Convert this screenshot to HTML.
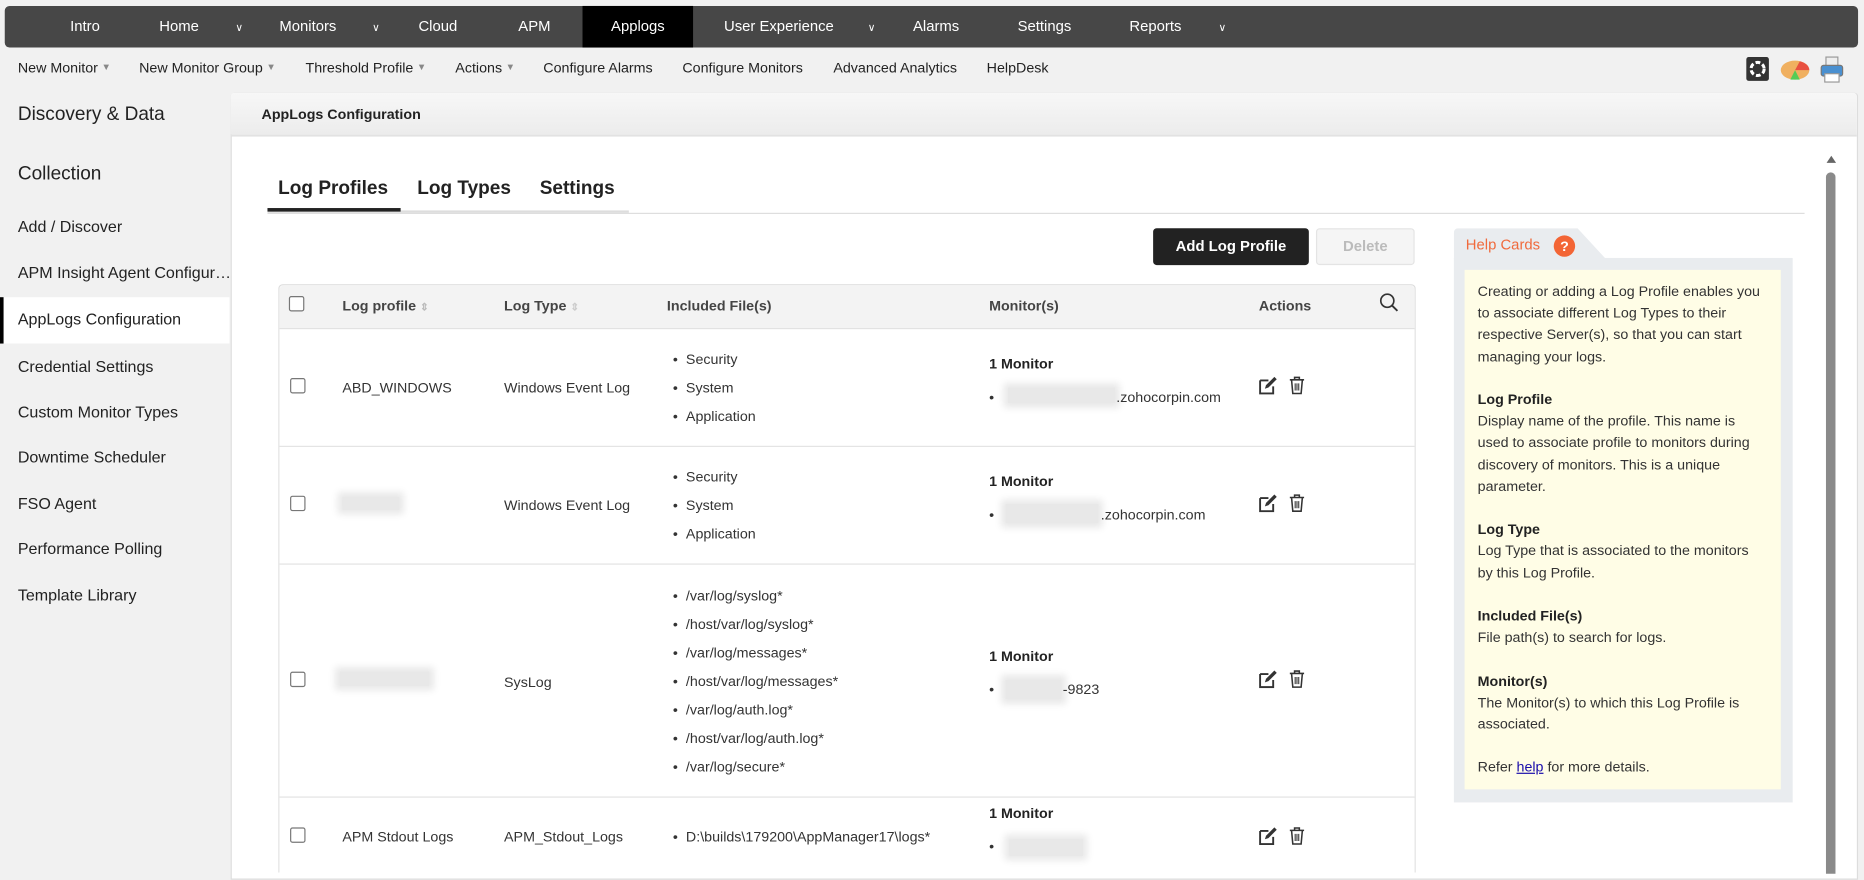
<!DOCTYPE html>
<html><head><meta charset="utf-8">
<style>
html,body{margin:0;padding:0;width:1864px;height:871px;overflow:hidden;background:#f1f1f1;}
#w{position:absolute;left:0;top:0;width:1568px;height:733px;transform:scale(1.18878);transform-origin:0 0;font-family:"Liberation Sans",sans-serif;color:#222;}
.a{position:absolute;white-space:nowrap;}
.nav{left:4px;top:5px;width:1559px;height:35px;background:#474747;border-radius:4px;}
.nav .a{color:#fff;font-size:12.5px;top:10px;}
.car{font-size:9px!important;top:13px!important;}
.sub{font-size:12px;top:50px;color:#222;}
.sub i{font-style:normal;color:#888;font-size:8px;vertical-align:2px;margin-left:3px;}
.side{font-size:13.5px;color:#222;}
.main{left:194px;top:78px;width:1367px;height:660px;background:#fff;border:1px solid #ddd;border-radius:3px 3px 0 0;}
.hdr{left:194px;top:78px;width:1368px;height:35px;background:linear-gradient(#f7f7f7,#ececec);border-bottom:2px solid #e2e2e2;border-radius:3px 3px 0 0;}
.td{font-size:12px;color:#333;}
.th{font-size:12px;font-weight:bold;color:#444;top:250px;}
.cb{width:11px;height:11px;border:1px solid #777;border-radius:2px;background:#fff;}
.bl{background:#e8e8e8;box-shadow:0 0 6px 4px #e8e8e8;}
.li{font-size:12px;color:#333;}
.li:before{content:"•";position:absolute;left:-11px;}
.help{font-size:12px;line-height:18.2px;color:#333;left:1243px;top:236px;white-space:normal;width:238px;}
.help b{color:#222;}
</style></head><body><div id="w">

<div class="a nav">
<span class="a" style="left:55px">Intro</span>
<span class="a" style="left:130px">Home</span><span class="a car" style="left:194px">&#8744;</span>
<span class="a" style="left:231px">Monitors</span><span class="a car" style="left:309px">&#8744;</span>
<span class="a" style="left:348px">Cloud</span>
<span class="a" style="left:432px">APM</span>
<div class="a" style="left:486px;top:0;width:93px;height:35px;background:#000"></div>
<span class="a" style="left:510px">Applogs</span>
<span class="a" style="left:605px">User Experience</span><span class="a car" style="left:726px">&#8744;</span>
<span class="a" style="left:764px">Alarms</span>
<span class="a" style="left:852px">Settings</span>
<span class="a" style="left:946px">Reports</span><span class="a car" style="left:1021px">&#8744;</span>
</div>

<span class="a sub" style="left:15px">New Monitor<i>&#9660;</i></span>
<span class="a sub" style="left:117px">New Monitor Group<i>&#9660;</i></span>
<span class="a sub" style="left:257px">Threshold Profile<i>&#9660;</i></span>
<span class="a sub" style="left:383px">Actions<i>&#9660;</i></span>
<span class="a sub" style="left:457px">Configure Alarms</span>
<span class="a sub" style="left:574px">Configure Monitors</span>
<span class="a sub" style="left:701px">Advanced Analytics</span>
<span class="a sub" style="left:830px">HelpDesk</span>

<div class="a" style="left:1469px;top:48px;width:19px;height:20px;background:#333;border-radius:2px"><svg width="19" height="20" viewBox="0 0 19 20"><circle cx="9.5" cy="10" r="5.5" fill="none" stroke="#fff" stroke-width="2.5" stroke-dasharray="4 2"/></svg></div>
<svg class="a" style="left:1497px;top:49px" width="26" height="20" viewBox="0 0 26 20"><ellipse cx="13" cy="10" rx="12" ry="8" fill="#f0b060"/><path d="M13 10 L25 10 A12 8 0 0 0 17 2.5Z" fill="#e85040"/><path d="M13 10 L9 18 L17 18Z" fill="#5c5"/></svg>
<svg class="a" style="left:1531px;top:47px" width="20" height="24" viewBox="0 0 20 24"><rect x="5" y="1" width="10" height="8" fill="#eee" stroke="#999"/><rect x="1" y="8" width="18" height="9" rx="2" fill="#4a90d0" stroke="#777"/><rect x="4" y="15" width="12" height="7" fill="#fff" stroke="#999"/></svg>

<span class="a side" style="left:15px;top:88px;font-size:16px">Discovery &amp; Data</span>
<span class="a side" style="left:15px;top:138px;font-size:16px">Collection</span>
<span class="a side" style="left:15px;top:183px">Add / Discover</span>
<span class="a side" style="left:15px;top:222px">APM Insight Agent Configur…</span>
<div class="a" style="left:0;top:250px;width:193px;height:39px;background:#fff;border-left:3px solid #000;box-sizing:border-box"></div>
<span class="a side" style="left:15px;top:261px">AppLogs Configuration</span>
<span class="a side" style="left:15px;top:301px">Credential Settings</span>
<span class="a side" style="left:15px;top:339px">Custom Monitor Types</span>
<span class="a side" style="left:15px;top:377px">Downtime Scheduler</span>
<span class="a side" style="left:15px;top:416px">FSO Agent</span>
<span class="a side" style="left:15px;top:454px">Performance Polling</span>
<span class="a side" style="left:15px;top:493px">Template Library</span>

<div class="a main"></div>
<div class="a hdr"></div>
<span class="a" style="left:220px;top:89px;font-size:12px;font-weight:bold;color:#222">AppLogs Configuration</span>

<span class="a" style="left:234px;top:150px;font-size:16px;font-weight:bold;color:#222">Log Profiles</span>
<span class="a" style="left:351px;top:150px;font-size:16px;font-weight:bold;color:#222">Log Types</span>
<span class="a" style="left:454px;top:150px;font-size:16px;font-weight:bold;color:#222">Settings</span>
<div class="a" style="left:225px;top:179px;width:1293px;height:1px;background:#ddd"></div>
<div class="a" style="left:225px;top:177px;width:304px;height:2px;background:#ddd"></div>
<div class="a" style="left:225px;top:175px;width:112px;height:3px;background:#222"></div>

<div class="a" style="left:970px;top:192px;width:131px;height:31px;background:#222;border-radius:3px;color:#fff;font-size:12.5px;font-weight:bold;text-align:center;line-height:31px">Add Log Profile</div>
<div class="a" style="left:1107px;top:192px;width:81px;height:29px;background:#f5f5f5;border:1px solid #e4e4e4;border-radius:3px;color:#bbb;font-size:12.5px;font-weight:bold;text-align:center;line-height:29px">Delete</div>

<div class="a" style="left:234px;top:239px;width:955px;height:494px;border:1px solid #ddd;border-bottom:none;border-radius:4px 4px 0 0"></div>
<div class="a" style="left:235px;top:240px;width:955px;height:36px;background:#f3f3f3;border-bottom:1px solid #ddd;border-radius:4px 4px 0 0"></div>
<div class="a cb" style="left:243px;top:249px"></div>
<span class="a th" style="left:288px">Log profile <span style="color:#bbb;font-size:9px">&#8661;</span></span>
<span class="a th" style="left:424px">Log Type <span style="color:#ccc;font-size:9px">&#8661;</span></span>
<span class="a th" style="left:561px">Included File(s)</span>
<span class="a th" style="left:832px">Monitor(s)</span>
<span class="a th" style="left:1059px">Actions</span>
<svg class="a" style="left:1160px;top:246px" width="17" height="17" viewBox="0 0 17 17"><circle cx="7" cy="7" r="5.5" fill="none" stroke="#333" stroke-width="1.4"/><path d="M11 11 L15.5 15.5" stroke="#333" stroke-width="1.6"/></svg>

<div class="a" style="left:235px;top:375px;width:955px;height:1px;background:#e3e3e3"></div>
<div class="a" style="left:235px;top:474px;width:955px;height:1px;background:#e3e3e3"></div>
<div class="a" style="left:235px;top:670px;width:955px;height:1px;background:#e3e3e3"></div>

<div class="a cb" style="left:244px;top:318px"></div>
<span class="a td" style="left:288px;top:319px">ABD_WINDOWS</span>
<span class="a td" style="left:424px;top:319px">Windows Event Log</span>
<span class="a li" style="left:577px;top:295px">Security</span>
<span class="a li" style="left:577px;top:319px">System</span>
<span class="a li" style="left:577px;top:343px">Application</span>
<span class="a td" style="left:832px;top:299px;font-weight:bold;color:#222">1 Monitor</span>
<span class="a li" style="left:843px;top:327px">&nbsp;</span>
<div class="a bl" style="left:848px;top:326px;width:90px;height:13px"></div>
<span class="a td" style="left:939px;top:327px">.zohocorpin.com</span>

<div class="a cb" style="left:244px;top:417px"></div>
<div class="a bl" style="left:288px;top:418px;width:48px;height:11px"></div>
<span class="a td" style="left:424px;top:418px">Windows Event Log</span>
<span class="a li" style="left:577px;top:394px">Security</span>
<span class="a li" style="left:577px;top:418px">System</span>
<span class="a li" style="left:577px;top:442px">Application</span>
<span class="a td" style="left:832px;top:398px;font-weight:bold;color:#222">1 Monitor</span>
<span class="a li" style="left:843px;top:426px">&nbsp;</span>
<div class="a bl" style="left:846px;top:424px;width:78px;height:16px"></div>
<span class="a td" style="left:926px;top:426px">.zohocorpin.com</span>

<div class="a cb" style="left:244px;top:565px"></div>
<div class="a bl" style="left:286px;top:565px;width:75px;height:12px"></div>
<span class="a td" style="left:424px;top:567px">SysLog</span>
<span class="a li" style="left:577px;top:494px">/var/log/syslog*</span>
<span class="a li" style="left:577px;top:518px">/host/var/log/syslog*</span>
<span class="a li" style="left:577px;top:542px">/var/log/messages*</span>
<span class="a li" style="left:577px;top:566px">/host/var/log/messages*</span>
<span class="a li" style="left:577px;top:590px">/var/log/auth.log*</span>
<span class="a li" style="left:577px;top:614px">/host/var/log/auth.log*</span>
<span class="a li" style="left:577px;top:638px">/var/log/secure*</span>
<span class="a td" style="left:832px;top:545px;font-weight:bold;color:#222">1 Monitor</span>
<span class="a li" style="left:843px;top:573px">&nbsp;</span>
<div class="a bl" style="left:846px;top:572px;width:47px;height:16px"></div>
<span class="a td" style="left:894px;top:573px">-9823</span>

<div class="a cb" style="left:244px;top:696px"></div>
<span class="a td" style="left:288px;top:697px">APM Stdout Logs</span>
<span class="a td" style="left:424px;top:697px">APM_Stdout_Logs</span>
<span class="a li" style="left:577px;top:697px">D:\builds\179200\AppManager17\logs*</span>
<span class="a td" style="left:832px;top:677px;font-weight:bold;color:#222">1 Monitor</span>
<span class="a li" style="left:843px;top:705px">&nbsp;</span>
<div class="a bl" style="left:849px;top:706px;width:62px;height:14px"></div>

<svg width="0" height="0" style="position:absolute"><defs>
<g id="ed"><path d="M1 4 H8 M1 4 V15 H12 V9" fill="none" stroke="#333" stroke-width="1.6"/><path d="M5 11 L6 8 L13 1 L15 3 L8 10 Z" fill="#333"/></g>
<g id="tr"><path d="M1 3.5 H13 M5 3.5 V1.5 H9 V3.5" fill="none" stroke="#333" stroke-width="1.3"/><path d="M2.5 4 L3.5 15 H10.5 L11.5 4" fill="none" stroke="#333" stroke-width="1.3"/><path d="M5.5 6.5 V12.5 M7 6.5 V12.5 M8.5 6.5 V12.5" stroke="#333" stroke-width="0.9"/></g>
</defs></svg>
<svg class="a" style="left:1059px;top:316px" width="16" height="16"><use href="#ed"/></svg>
<svg class="a" style="left:1084px;top:316px" width="14" height="16"><use href="#tr"/></svg>
<svg class="a" style="left:1059px;top:415px" width="16" height="16"><use href="#ed"/></svg>
<svg class="a" style="left:1084px;top:415px" width="14" height="16"><use href="#tr"/></svg>
<svg class="a" style="left:1059px;top:563px" width="16" height="16"><use href="#ed"/></svg>
<svg class="a" style="left:1084px;top:563px" width="14" height="16"><use href="#tr"/></svg>
<svg class="a" style="left:1059px;top:695px" width="16" height="16"><use href="#ed"/></svg>
<svg class="a" style="left:1084px;top:695px" width="14" height="16"><use href="#tr"/></svg>

<svg class="a" style="left:1223px;top:192px" width="130" height="26"><path d="M0 26 V4 Q0 0 4 0 H104 L128 26 Z" fill="#e9ecef"/></svg>
<div class="a" style="left:1223px;top:217px;width:285px;height:458px;background:#e9ecef"></div>
<div class="a" style="left:1232px;top:227px;width:266px;height:437px;background:#fffde6"></div>
<span class="a" style="left:1233px;top:199px;font-size:12.5px;color:#f06a3c">Help Cards</span>
<div class="a" style="left:1307px;top:198px;width:18px;height:18px;border-radius:50%;background:#f36535;color:#fff;font-size:12px;font-weight:bold;text-align:center;line-height:18px">?</div>
<div class="a help">Creating or adding a Log Profile enables you to associate different Log Types to their respective Server(s), so that you can start managing your logs.<br><br><b>Log Profile</b><br>Display name of the profile. This name is used to associate profile to monitors during discovery of monitors. This is a unique parameter.<br><br><b>Log Type</b><br>Log Type that is associated to the monitors by this Log Profile.<br><br><b>Included File(s)</b><br>File path(s) to search for logs.<br><br><b>Monitor(s)</b><br>The Monitor(s) to which this Log Profile is associated.<br><br>Refer <span style="color:#1a0dab;text-decoration:underline">help</span> for more details.</div>

<svg class="a" style="left:1536px;top:130px" width="9" height="8"><path d="M0.5 7 L4.5 1 L8.5 7Z" fill="#666"/></svg>
<div class="a" style="left:1536px;top:145px;width:8px;height:590px;background:#8a8a8a;border-radius:4px 4px 0 0"></div>

</div></body></html>
